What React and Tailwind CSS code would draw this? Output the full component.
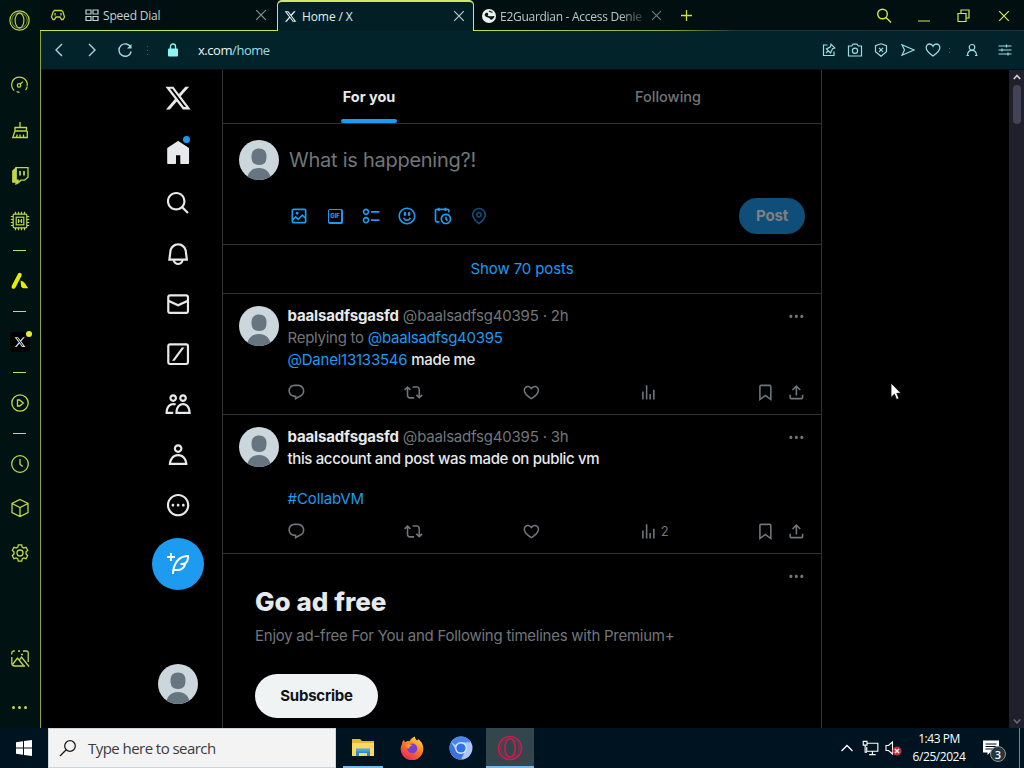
import React from "react";

const P = {
  x: "M18.244 2.25h3.308l-7.227 8.26 8.502 11.24H16.17l-5.214-6.817L4.99 21.75H1.68l7.73-8.835L1.254 2.25H8.08l4.713 6.231zm-1.161 17.52h1.833L7.084 4.126H5.117z",
  home: "M21.591 7.146L12.52 1.157c-.316-.21-.724-.21-1.04 0l-9.071 5.99c-.26.173-.409.456-.409.757v13.183c0 .502.418.913.929.913H9.14c.51 0 .929-.41.929-.913v-7.075h3.909v7.075c0 .502.417.913.928.913h6.165c.511 0 .929-.41.929-.913V7.904c0-.301-.158-.584-.408-.758z",
  search: "M10.25 3.75c-3.59 0-6.5 2.91-6.5 6.5s2.91 6.5 6.5 6.5c1.795 0 3.419-.726 4.596-1.904 1.178-1.177 1.904-2.801 1.904-4.596 0-3.59-2.91-6.5-6.5-6.5zm-8.5 6.5c0-4.694 3.806-8.5 8.5-8.5s8.5 3.806 8.5 8.5c0 1.986-.682 3.815-1.824 5.262l4.781 4.781-1.414 1.414-4.781-4.781c-1.447 1.142-3.276 1.824-5.262 1.824-4.694 0-8.5-3.806-8.5-8.5z",
  bell: "M19.993 9.042C19.48 5.017 16.054 2 11.996 2s-7.49 3.021-7.999 7.051L2.866 18H7.1c.463 2.282 2.481 4 4.9 4s4.437-1.718 4.9-4h4.236l-1.143-8.958zM12 20c-1.306 0-2.417-.835-2.829-2h5.658c-.412 1.165-1.523 2-2.829 2zm-6.866-4l.847-6.698C6.364 6.272 8.941 4 11.996 4s5.627 2.268 6.013 5.295L18.864 16H5.134z",
  mail: "M1.998 5.5c0-1.381 1.119-2.5 2.5-2.5h15c1.381 0 2.5 1.119 2.5 2.5v13c0 1.381-1.119 2.5-2.5 2.5h-15c-1.381 0-2.5-1.119-2.5-2.5v-13zm2.5-.5c-.276 0-.5.224-.5.5v2.764l8 3.638 8-3.636V5.5c0-.276-.224-.5-.5-.5h-15zm15.5 5.463l-8 3.636-8-3.638V18.5c0 .276.224.5.5.5h15c.276 0 .5-.224.5-.5v-8.037z",
  slash: "M4.5 2C3.12 2 2 3.12 2 4.5v15C2 20.88 3.12 22 4.5 22h15c1.38 0 2.5-1.12 2.5-2.5v-15C22 3.12 20.88 2 19.5 2h-15zM4 4.5c0-.28.22-.5.5-.5h15c.28 0 .5.22.5.5v15c0 .28-.22.5-.5.5h-15c-.28 0-.5-.22-.5-.5v-15zM15.3 6h2.4L8.8 18H6.4z",
  people: "M7.501 19.917L7.471 21H.472l.029-1.027c.184-6.618 3.736-8.977 7-8.977.963 0 1.95.212 2.87.672-.444.478-.851 1.03-1.212 1.656-.507-.204-1.054-.329-1.658-.329-2.767 0-4.57 2.223-4.938 6.004H7.56c-.023.302-.05.599-.059.918zm15.998.056L23.528 21H9.472l.029-1.027c.184-6.618 3.736-8.977 7-8.977s6.816 2.358 7 8.977zM21.437 19c-.367-3.781-2.17-6.004-4.938-6.004s-4.57 2.223-4.938 6.004h9.875zm-4.938-9c-.799 0-1.527-.279-2.116-.73-.836-.64-1.384-1.638-1.384-2.77 0-1.93 1.567-3.5 3.5-3.5s3.5 1.57 3.5 3.5c0 1.132-.548 2.13-1.384 2.77-.589.451-1.317.73-2.116.73zm-1.5-3.5c0 .827.673 1.5 1.5 1.5s1.5-.673 1.5-1.5-.673-1.5-1.5-1.5-1.5.673-1.5 1.5zM7.5 3C9.433 3 11 4.57 11 6.5S9.433 10 7.5 10 4 8.43 4 6.5 5.567 3 7.5 3zm0 2C6.673 5 6 5.673 6 6.5S6.673 8 7.5 8 9 7.327 9 6.5 8.327 5 7.5 5z",
  person: "M5.651 19h12.698c-.337-1.8-1.023-3.21-1.945-4.19C15.318 13.65 13.838 13 12 13s-3.317.65-4.404 1.81c-.922.98-1.608 2.39-1.945 4.19zm.486-5.56C7.627 11.85 9.648 11 12 11s4.373.85 5.863 2.44c1.477 1.58 2.366 3.8 2.632 6.46l.11 1.1H3.395l.11-1.1c.266-2.66 1.155-4.88 2.632-6.46zM12 4c-1.105 0-2 .9-2 2s.895 2 2 2 2-.9 2-2-.895-2-2-2zM8 6c0-2.21 1.791-4 4-4s4 1.79 4 4-1.791 4-4 4-4-1.79-4-4z",
  moreCircle: "M3.75 12c0-4.56 3.69-8.25 8.25-8.25s8.25 3.69 8.25 8.25-3.69 8.25-8.25 8.25S3.75 16.56 3.75 12zM12 1.75C6.34 1.75 1.75 6.34 1.75 12S6.34 22.25 12 22.25 22.25 17.66 22.25 12 17.66 1.75 12 1.75zm-4.75 11.5c.69 0 1.25-.56 1.25-1.25s-.56-1.25-1.25-1.25S6 11.31 6 12s.56 1.25 1.25 1.25zm9.5 0c.69 0 1.25-.56 1.25-1.25s-.56-1.25-1.25-1.25-1.25.56-1.25 1.25.56 1.25 1.25 1.25zM13.25 12c0 .69-.56 1.25-1.25 1.25s-1.25-.56-1.25-1.25.56-1.25 1.25-1.25 1.25.56 1.25 1.25z",
  compose: "M23 3c-6.62-.1-10.38 2.421-13.05 6.03C7.29 12.61 6 17.331 6 22h2c0-1.007.07-2.012.19-3H12c4.1 0 7.48-3.082 7.94-7.054C22.79 10.147 23.17 6.359 23 3zm-7 8h-1.5v2H16c.63-.016 1.2-.08 1.72-.188C16.95 15.24 14.68 17 12 17H8.55c.57-2.512 1.57-4.851 3-6.78 2.16-2.912 5.29-4.911 9.45-5.187C20.95 8.079 19.9 11 16 11zM4 9V6H1V4h3V1h2v3h3v2H6v3H4z",
  media: "M3 5.5C3 4.119 4.119 3 5.5 3h13C19.881 3 21 4.119 21 5.5v13c0 1.381-1.119 2.5-2.5 2.5h-13C4.119 21 3 19.881 3 18.5v-13zM5.5 5c-.276 0-.5.224-.5.5v9.086l3-3 3 3 5-5 3 3V5.5c0-.276-.224-.5-.5-.5h-13zM19 15.414l-3-3-5 5-3-3-3 3V18.5c0 .276.224.5.5.5h13c.276 0 .5-.224.5-.5v-3.086zM9.75 7C8.784 7 8 7.784 8 8.75s.784 1.75 1.75 1.75 1.75-.784 1.75-1.75S10.716 7 9.75 7z",
  poll: "M6 5c-1.1 0-2 .895-2 2s.9 2 2 2 2-.895 2-2-.9-2-2-2zM2 7c0-2.209 1.79-4 4-4s4 1.791 4 4-1.79 4-4 4-4-1.791-4-4zm20 1H12V6h10v2zM6 15c-1.1 0-2 .895-2 2s.9 2 2 2 2-.895 2-2-.9-2-2-2zm-4 2c0-2.209 1.79-4 4-4s4 1.791 4 4-1.79 4-4 4-4-1.791-4-4zm20 1H12v-2h10v2z",
  emoji: "M8 9.5C8 8.119 8.672 7 9.5 7S11 8.119 11 9.5 10.328 12 9.5 12 8 10.881 8 9.5zm6.5 2.5c.828 0 1.5-1.119 1.5-2.5S15.328 7 14.5 7 13 8.119 13 9.5s.672 2.5 1.5 2.5zM12 16c-2.224 0-3.021-2.227-3.051-2.316l-1.897.633c.05.15 1.271 3.684 4.949 3.684s4.898-3.533 4.949-3.684l-1.896-.638c-.033.095-.83 2.322-3.053 2.322zm10.25-4.001c0 5.652-4.598 10.25-10.25 10.25S1.75 17.652 1.75 12 6.348 1.75 12 1.75 22.25 6.348 22.25 12zm-2 0c0-4.549-3.701-8.25-8.25-8.25S3.75 7.451 3.75 12s3.701 8.25 8.25 8.25 8.25-3.701 8.25-8.25z",
  schedule: "M6 3V2h2v1h6V2h2v1h1.5C18.88 3 20 4.119 20 5.5v2h-2v-2c0-.276-.22-.5-.5-.5H16v1h-2V5H8v1H6V5H4.5c-.28 0-.5.224-.5.5v12c0 .276.22.5.5.5h3v2h-3C3.12 20 2 18.881 2 17.5v-12C2 4.119 3.12 3 4.5 3H6zm9.5 8c-2.49 0-4.5 2.015-4.5 4.5s2.01 4.5 4.5 4.5 4.5-2.015 4.5-4.5-2.01-4.5-4.5-4.5zM9 15.5C9 11.91 11.91 9 15.5 9s6.5 2.91 6.5 6.5-2.91 6.5-6.5 6.5S9 19.09 9 15.5zm5.5-2.5h2v2.086l1.71 1.707-1.42 1.414-2.29-2.293V13z",
  pin: "M12 7c-1.93 0-3.5 1.57-3.5 3.5S10.07 14 12 14s3.5-1.57 3.5-3.5S13.93 7 12 7zm0 5c-.827 0-1.5-.673-1.5-1.5S11.173 9 12 9s1.5.673 1.5 1.5S12.827 12 12 12zm0-10c-4.687 0-8.5 3.813-8.5 8.5 0 5.967 7.621 11.116 7.945 11.332l.555.37.555-.37c.324-.216 7.945-5.365 7.945-11.332C20.5 5.813 16.687 2 12 2zm0 17.77c-1.665-1.241-6.5-5.196-6.5-9.27C5.5 6.916 8.416 4 12 4s6.5 2.916 6.5 6.5c0 4.073-4.835 8.028-6.5 9.27z",
  reply: "M1.751 10c0-4.42 3.584-8 8.005-8h4.366c4.49 0 8.129 3.64 8.129 8.13 0 2.96-1.607 5.68-4.196 7.11l-8.054 4.46v-3.69h-.067c-4.49.1-8.183-3.51-8.183-8.01zm8.005-6c-3.317 0-6.005 2.69-6.005 6 0 3.37 2.77 6.08 6.138 6.01l.351-.01h1.761v2.3l5.087-2.81c1.951-1.08 3.163-3.13 3.163-5.36 0-3.39-2.744-6.13-6.129-6.13H9.756z",
  repost: "M4.5 3.88l4.432 4.14-1.364 1.46L5.5 7.55V16c0 1.1.896 2 2 2H13v2H7.5c-2.209 0-4-1.79-4-4V7.55L1.432 9.48.068 8.02 4.5 3.88zM16.5 6H11V4h5.5c2.209 0 4 1.79 4 4v8.45l2.068-1.93 1.364 1.46-4.432 4.14-4.432-4.14 1.364-1.46 2.068 1.93V8c0-1.1-.896-2-2-2z",
  like: "M16.697 5.5c-1.222-.06-2.679.51-3.89 2.16l-.805 1.09-.806-1.09C9.984 6.01 8.526 5.44 7.304 5.5c-1.243.07-2.349.78-2.91 1.91-.552 1.12-.633 2.78.479 4.82 1.074 1.97 3.257 4.27 7.129 6.61 3.87-2.34 6.052-4.64 7.126-6.61 1.111-2.04 1.03-3.7.477-4.82-.561-1.13-1.666-1.84-2.908-1.91zm4.187 7.69c-1.351 2.48-4.001 5.12-8.379 7.67l-.503.3-.504-.3c-4.379-2.55-7.029-5.19-8.382-7.67-1.36-2.5-1.41-4.86-.514-6.67.887-1.79 2.647-2.91 4.601-3.01 1.651-.09 3.368.56 4.798 2.01 1.429-1.45 3.146-2.1 4.796-2.01 1.954.1 3.714 1.22 4.601 3.01.896 1.81.846 4.17-.514 6.67z",
  views: "M8.75 21V3h2v18h-2zM18 21V8.5h2V21h-2zM4 21l.004-10h2L6 21H4zm9.248 0v-7h2v7h-2z",
  bookmark: "M4 4.5C4 3.12 5.119 2 6.5 2h11C18.881 2 20 3.12 20 4.5v18.44l-8-5.71-8 5.71V4.5zM6.5 4c-.276 0-.5.22-.5.5v14.56l6-4.29 6 4.29V4.5c0-.28-.224-.5-.5-.5h-11z",
  share: "M12 2.59l5.7 5.7-1.41 1.42L13 6.41V16h-2V6.41l-3.3 3.3-1.41-1.42L12 2.59zM21 15l-.02 3.51c0 1.38-1.12 2.49-2.5 2.49H5.5C4.11 21 3 19.88 3 18.5V15h2v3.5c0 .28.22.5.5.5h12.98c.28 0 .5-.22.5-.5L19 15h2z",
  dots: "M3 12c0-1.1.9-2 2-2s2 .9 2 2-.9 2-2 2-2-.9-2-2zm9 2c1.1 0 2-.9 2-2s-.9-2-2-2-2 .9-2 2 .9 2 2 2zm7 0c1.1 0 2-.9 2-2s-.9-2-2-2-2 .9-2 2 .9 2 2 2z",
};

function Glyph({ d, className }) {
  return (
    <svg viewBox="0 0 24 24" fill="currentColor" fillRule="evenodd" className={`block shrink-0 ${className}`}>
      <path d={d} />
    </svg>
  );
}

function Line({ className = "size-5", box = 20, width = 1.3, children }) {
  return (
    <svg
      viewBox={`0 0 ${box} ${box}`}
      fill="none"
      stroke="currentColor"
      strokeWidth={width}
      className={`block shrink-0 ${className}`}
    >
      {children}
    </svg>
  );
}

function OperaRing({ className }) {
  return (
    <Line className={className} width={1.1}>
      <circle cx="10" cy="10" r="9.2" />
      <circle cx="10" cy="10" r="7.4" strokeWidth="0.6" />
      <ellipse cx="10" cy="10" rx="4.2" ry="7" />
    </Line>
  );
}

function SideCell({ className = "h-[45px]", children }) {
  return <div className={`flex w-[39px] shrink-0 items-center justify-center ${className}`}>{children}</div>;
}

function Rule({ className = "h-[15px]" }) {
  return (
    <SideCell className={className}>
      <div className="h-px w-[13px] bg-[#c6e048]" />
    </SideCell>
  );
}

function OperaSidebar() {
  return (
    <aside className="flex w-10 shrink-0 flex-col bg-[#011212] text-[#c0d846]">
      <SideCell className="mb-[22px] h-10">
        <OperaRing className="size-[21px]" />
      </SideCell>
      <SideCell>
        <Line className="size-[19px]">
          <path d="M4.4 16.4A8.2 8.2 0 1 1 18 12M18 12.5a8 8 0 0 1-1.6 3.4M10 18.2l-3-.6" />
          <circle cx="9.5" cy="11" r="1.8" />
          <path d="M10.8 9.7 13.5 7" />
        </Line>
      </SideCell>
      <SideCell>
        <Line>
          <path d="M10 2v5M5 7.5h11.5V11H5zM5 11l-2.3 6.5h14.6V11M6.5 17.5l.7-3M10 17.5v-3M13.5 17.5v-3" />
        </Line>
      </SideCell>
      <SideCell>
        <Line>
          <path d="M6 2.7h12v9.5l-3.5 3H11L8 18v-2.8H6z" />
          <path d="M6 3 2.8 6v11H6v2l3-2.8-3-1z" fill="currentColor" />
          <path d="M10 6v4.5M14 6v4.5" strokeWidth="1.7" />
        </Line>
      </SideCell>
      <SideCell>
        <Line className="mt-0.5 size-5" width={1.2}>
          <rect x="3.2" y="3.2" width="13.6" height="13.6" rx="1" />
          <rect x="6.2" y="6.2" width="7.6" height="7.6" />
          <path d="M5.5.8v2.4M8.5.8v2.4M11.5.8v2.4M14.5.8v2.4M5.5 16.8v2.4M8.5 16.8v2.4M11.5 16.8v2.4M14.5 16.8v2.4M.8 5.5h2.4M.8 8.5h2.4M.8 11.5h2.4M.8 14.5h2.4M16.8 5.5h2.4M16.8 8.5h2.4M16.8 11.5h2.4M16.8 14.5h2.4" />
          <path d="M8.5 8v4M11.5 8v4M8.5 10h3" />
        </Line>
      </SideCell>
      <Rule className="h-[16px]" />
      <SideCell className="h-[46px]">
        <svg viewBox="0 0 20 20" className="block size-5" fill="#e4f000">
          <path d="M8.300 2.200q1.800-1 3 .3.9 1.200 0 2.700L5.500 16.500q-1 1.700-3.200 1Q.9 16.500 1.900 14.500z" />
          <path d="M10.500 9.500q2.500.5 4.500 3l3.200 4.700h-4.700q-1.500 0-2.300-1.800z" />
        </svg>
      </SideCell>
      <Rule />
      <SideCell className="h-[45px]">
        <div className="relative">
          <div className="flex size-5 items-center justify-center rounded-sm bg-black text-[#d8e4e2]">
            <Glyph d={P.x} className="size-3" />
          </div>
          <div className="absolute -right-[2px] -top-[1px] size-1.5 rounded-full bg-[#e6ee2e]" />
        </div>
      </SideCell>
      <Rule className="h-[16px]" />
      <SideCell>
        <Line>
          <circle cx="10" cy="10" r="8.2" />
          <path d="M7.5 7v6h2.2l3.6-3-3.6-3z" />
        </Line>
      </SideCell>
      <Rule className="h-[16px]" />
      <SideCell>
        <Line>
          <circle cx="10" cy="10" r="8.3" />
          <path d="M10 5v5.2l2.6 2.2" />
        </Line>
      </SideCell>
      <SideCell className="h-[45px] pb-px">
        <Line>
          <path d="M10 1.5l8 4v9l-8 4-8-4v-9zM2 5.5l8 4 8-4M10 9.5v9" />
        </Line>
      </SideCell>
      <SideCell className="h-[45px] pb-px">
        <Line>
          <circle cx="10" cy="10" r="3" />
          <path d="M8.3 1.8h3.4l.5 2.3 1.5.9 2.3-.7 1.7 3-1.7 1.7v2l1.7 1.7-1.7 3-2.3-.7-1.5.9-.5 2.3H8.3l-.5-2.3-1.5-.9-2.3.7-1.700-3L4 11V9L2.300 7.300l1.700-3 2.300.7 1.500-.9z" />
        </Line>
      </SideCell>
      <SideCell className="mt-auto h-[44px] pt-0.5">
        <Line>
          <path d="M1.8 5.5V4a2 2 0 0 1 2-2h1M8 2h2M13 2h3.2a2 2 0 0 1 2 2v9M1.8 8v6a3 3 0 0 0 3 3H15" />
          <path d="M2.5 15.5 7.5 9l6 7.500M9.500 11l2-3 7.500 9.500M11 5.500h2" />
        </Line>
      </SideCell>
      <SideCell className="mb-[-1px] h-[49px] pt-[11px]">
        <div className="mb-1.5 flex gap-[3px]">
          <i className="size-[3px] rounded-full bg-current" />
          <i className="size-[3px] rounded-full bg-current" />
          <i className="size-[3px] rounded-full bg-current" />
        </div>
      </SideCell>
    </aside>
  );
}

function Close({ className }) {
  return (
    <Line box={12} width={1.2} className={`size-3 ${className}`}>
      <path d="M1.2 1.2l9.6 9.6M10.8 1.2l-9.6 9.6" />
    </Line>
  );
}

function TabBar() {
  return (
    <div className="flex h-[31px] shrink-0 bg-[#010f10] font-['Open_Sans','Noto_Sans',sans-serif] text-[12px]">
      <div className="flex w-[237px] items-center border-b border-[#c6e24a] pl-[10px] text-[#c3d2d2]">
        <Line className="h-4 w-4 text-[#c0d440]" box={16}>
          <path d="M4.5 3.5h7L13 5l1.5 5-1.5 2.5h-1.5L10 10H6l-1.5 2.5H3L1.5 10 3 5zM5 6v2.5M11 6v2.5" />
        </Line>
        <Line className="ml-[19px] size-[14px]" box={14} width={1.2}>
          <path d="M1 2h5v4H1zM8 2h5v4H8zM1 8.5h5v4H1zM8 8.5h5v4H8z" />
        </Line>
        <span className="ml-[4px] pt-0.5 tracking-[-0.19px]">Speed Dial</span>
        <Close className="ml-auto mr-[10px] text-[#7e9494]" />
      </div>
      <div className="flex w-[197px] items-center rounded-t-[5px] border-x border-t-2 border-[#cfe868] bg-[#021f25] pb-px pl-[6px] text-[#e3f0f0]">
        <Glyph d={P.x} className="size-[13px]" />
        <span className="ml-[5px] pt-px tracking-[-0.1px]">Home / X</span>
        <Close className="ml-auto mr-[8px] text-[#b9cccc]" />
      </div>
      <div className="flex grow items-center bg-[image:linear-gradient(to_right,#c0dc48,#8fa83c_36%,#1b3438_48%)] bg-[length:100%_1px] bg-bottom bg-no-repeat">
        <div className="flex h-[31px] w-[234px] items-center pl-[8px] text-[#b9c8c8]">
          <svg viewBox="0 0 14 14" className="block size-[14px]">
            <circle cx="7" cy="7" r="7" fill="#eef1f1" />
            <path d="M2.500 6C3.500 3 6 3.500 6.200 5s-1.500 1 .5 2 3.800-.5 5.800 0c-1 4-4 4.200-4.500 3S6.800 8.800 5 8.200 3.500 7 2.500 6z" fill="#0a1618" />
            <path d="M7 2l3.500 1.500" stroke="#0a1618" strokeWidth="1.300" />
          </svg>
          <span className="ml-[4px] w-[142px] whitespace-nowrap pt-0.5 tracking-[-0.28px] [mask-image:linear-gradient(to_right,#000_84%,rgba(0,0,0,0.25))]">
            E2Guardian - Access Denie
          </span>
          <Close className="ml-[9px] size-[11px] text-[#6b8080]" />
          <Line className="ml-[18px] size-[13px] text-[#ccdf3c]" box={13}>
            <path d="M6.5 1v11M1 6.500h11" />
          </Line>
        </div>
        <div className="ml-auto flex items-center text-[#d2ea4c]">
          <Line className="size-4" box={16} width={1.4}>
            <circle cx="6.5" cy="6" r="4.8" />
            <path d="M10 9.500l5 5" />
          </Line>
          <Line className="ml-[26px] mt-[10px] h-1 w-3" box={12} width={3}>
            <path d="M-12 6h36" />
          </Line>
          <Line className="ml-[27px] size-[13px]" box={13} width={1.2}>
            <path d="M1 4.500h8v8H1zM4 4.500V1h8v8H9" />
          </Line>
          <Close className="ml-[28px] mr-[14px]" />
        </div>
      </div>
    </div>
  );
}

function AddressBar() {
  return (
    <div className="flex h-[39px] shrink-0 items-center border-b border-[#021014] bg-[#02232a] text-[#9fdbe0]">
      <Line className="ml-[11px] size-[14px]" box={14} width={1.4}>
        <path d="M10 1 4 7l6 6" />
      </Line>
      <Line className="ml-[19px] size-[14px]" box={14} width={1.4}>
        <path d="M4 1l6 6-6 6" />
      </Line>
      <Line className="ml-[18px] size-4" box={16} width={1.4}>
        <path d="M13.8 5.500A6.200 6.200 0 1 0 14.200 9.500" />
        <path d="M14.5 2v4.500H10z" fill="currentColor" stroke="none" />
      </Line>
      <div className="ml-[14px] flex flex-col gap-[3px]">
        <i className="size-px bg-[#2c6a70]" />
        <i className="size-px bg-[#2c6a70]" />
        <i className="size-px bg-[#2c6a70]" />
      </div>
      <svg viewBox="0 0 12 14" className="ml-[19px] block h-[14px] w-3 text-[#8ff3f3]">
        <rect x="1" y="5.500" width="10" height="8" rx="1" fill="currentColor" />
        <path d="M3.500 6V3.500a2.500 2.500 0 0 1 5 0V6" fill="none" stroke="currentColor" strokeWidth="1.400" />
      </svg>
      <span className="ml-[19px] pt-px font-['Open_Sans','Noto_Sans',sans-serif] text-[13px] tracking-[-0.45px] text-[#e4f6f6]">
        x.com<span className="text-[#a3dce2]">/home</span>
      </span>
      <div className="ml-auto mr-[12px] flex items-center">
        <Line className="size-[14px]" box={14} width={1.2}>
          <path d="M5.500 2H1.500v10.500H12V8.500M9 1.200l3.800 3.800-2.300.7-2 4.200-4-4 4-2zM6.500 7.500 4 10" />
        </Line>
        <Line className="ml-[11px] size-4" box={16} width={1.2}>
          <path d="M1.500 4h3.200L6 2.200h4L11.300 4h3.200v10h-13z" />
          <circle cx="8" cy="8.800" r="2.600" />
        </Line>
        <Line className="ml-[11px] size-[14px]" box={14} width={1.2}>
          <path d="M7 .8l5.500 1.800v6.200L7 13.300 1.500 8.800V2.600zM5 4.800l4 4M9 4.800l-4 4" />
        </Line>
        <Line className="ml-[13px] size-[14px]" box={14} width={1.2}>
          <path d="M1 1.800 13 7 1 12.200 3.500 7z" />
        </Line>
        <Line className="ml-[10px] size-4" box={16} width={1.3}>
          <path d="M8 14C4.500 11.500 1.200 9 1.200 5.700 1.200 3.500 2.800 2 4.700 2 6.200 2 7.400 2.900 8 4.200 8.600 2.900 9.800 2 11.300 2c1.900 0 3.500 1.500 3.500 3.700C14.800 9 11.500 11.500 8 14z" />
        </Line>
        <div className="ml-[8px] flex flex-col gap-[3px]">
          <i className="size-px bg-[#2c6a70]" />
          <i className="size-px bg-[#2c6a70]" />
        </div>
        <Line className="ml-[15px] size-[14px]" box={14} width={1.2}>
          <circle cx="7" cy="4.300" r="2.800" />
          <path d="M2.500 12.500c0-3.500 2-5.200 4.500-5.200s4.500 1.700 4.500 5.200M1.500 12.500H4M10 12.500h2.500" />
        </Line>
        <Line className="ml-[19px] size-[14px]" box={14} width={1.2}>
          <path d="M.5 3H13.500M.5 7H13.500M.5 11H13.500M8.500 1.500v3M4 5.500v3M10 9.500v3" />
        </Line>
      </div>
    </div>
  );
}

function Avatar() {
  return (
    <svg viewBox="0 0 40 40" className="block size-10 shrink-0 overflow-hidden rounded-full">
      <rect width="40" height="40" fill="#ccd6dd" />
      <path d="M20 8.500c5 0 7.500 3 7.500 7.500 0 4.500-.8 9-7.500 9s-7.500-4.500-7.500-9c0-4.500 2.500-7.500 7.500-7.500z" fill="#66757f" />
      <path d="M8 40c.5-8 5.500-12 12-12s11.500 4 12 12z" fill="#66757f" />
    </svg>
  );
}

const NAV = [
  { d: P.home, dot: true },
  { d: P.search },
  { d: P.bell },
  { d: P.mail },
  { d: P.slash },
  { d: P.people },
  { d: P.person },
  { d: P.moreCircle },
];

function XNav() {
  return (
    <nav className="ml-[111px] flex w-[52px] shrink-0 flex-col items-center text-[#e7e9ea]">
      <div className="flex h-[58px] items-center pb-[2px]">
        <Glyph d={P.x} className="size-[28px]" />
      </div>
      {NAV.map((n, i) => (
        <div key={i} className="relative flex h-[50.25px] items-center">
          <Glyph d={n.d} className="size-[26.25px]" />
          {n.dot && <span className="absolute right-[1px] top-[8px] size-[7px] rounded-full bg-[#1d9bf0]" />}
        </div>
      ))}
      <div className="mt-2 flex size-[52px] items-center justify-center rounded-full bg-[#1d9bf0] text-white">
        <Glyph d={P.compose} className="size-6" />
      </div>
      <div className="mb-6 mt-auto">
        <Avatar />
      </div>
    </nav>
  );
}

function Action({ d, children, className = "" }) {
  return (
    <div className={`flex items-center gap-[3px] ${className}`}>
      <Glyph d={d} className="size-[18.75px]" />
      {children}
    </div>
  );
}

function Post({ age, views, children, className }) {
  return (
    <article className={`flex border-b border-[#2f3336] pl-4 pt-3 text-[15px] ${className}`}>
      <Avatar />
      <div className="ml-2 flex w-[519px] flex-col">
        <div className="flex h-[20px] items-center pl-[0.5px]">
          <span className="font-bold tracking-[-0.15px] text-[#e7e9ea]">baalsadfsgasfd</span>
          <span className="ml-1 tracking-[-0.2px] text-[#71767b]">@baalsadfsg40395 · {age}</span>
          <Glyph d={P.dots} className="ml-auto size-[18.75px] text-[#71767b]" />
        </div>
        {children}
        <div className="mb-[12px] mt-auto flex h-5 items-center text-[#71767b]">
          <Action d={P.reply} className="w-[117px]" />
          <Action d={P.repost} className="w-[118px]" />
          <Action d={P.like} className="w-[117px]" />
          <Action d={P.views}>
            <span className="pt-0.5 text-[13px]">{views}</span>
          </Action>
          <Action d={P.bookmark} className="ml-auto" />
          <Action d={P.share} className="ml-[12.5px]" />
        </div>
      </div>
    </article>
  );
}

function Timeline() {
  return (
    <main className="ml-[18px] flex w-[600px] shrink-0 flex-col overflow-hidden border-x border-[#2f3336] font-['Inter','Roboto',sans-serif]">
      <div className="flex h-[54px] shrink-0 border-b border-[#2f3336] text-[14.5px]">
        <div className="flex w-[292px] justify-center">
          <div className="flex flex-col">
            <span className="flex h-[49px] items-center pt-[5px] font-bold tracking-[-0.02px] text-[#e7e9ea]">For you</span>
            <span className="-mx-[1.5px] h-1 rounded-full bg-[#1d9bf0]" />
          </div>
        </div>
        <div className="flex h-[50px] w-[306px] items-center justify-center pt-1 font-medium text-[#71767b]">Following</div>
      </div>

      <div className="flex h-[121px] shrink-0 border-b border-[#2f3336] pl-4 pt-4">
        <Avatar />
        <div className="flex w-[526px] flex-col pl-[10px]">
          <div className="flex h-10 items-center text-[20px] tracking-[-0.26px] text-[#71767b]">What is happening?!</div>
          <div className="mt-[18px] flex h-9 items-center gap-[16px] text-[#1d9bf0]">
            <Glyph d={P.media} className="size-5" />
            <div className="flex size-5 items-center justify-center">
              <div className="flex size-[15px] items-center justify-center rounded-[2px] bg-current p-[1.5px]">
                <span className="flex size-full items-center justify-center rounded-[1px] bg-black text-[6px] font-extrabold leading-[6px]">
                  <span className="text-[#1d9bf0]">GIF</span>
                </span>
              </div>
            </div>
            <Glyph d={P.poll} className="size-5" />
            <Glyph d={P.emoji} className="size-5" />
            <Glyph d={P.schedule} className="size-5" />
            <Glyph d={P.pin} className="size-5 opacity-50" />
            <button className="ml-auto h-9 w-[66px] rounded-full bg-[#0f4e78] text-[15px] font-bold tracking-[-0.15px] text-[#808080]">
              Post
            </button>
          </div>
        </div>
      </div>

      <div className="flex h-[49px] shrink-0 items-center justify-center border-b border-[#2f3336] text-[15px] tracking-[-0.12px] text-[#1d9bf0]">
        Show 70 posts
      </div>

      <Post age="2h" className="h-[121px] shrink-0">
        <div className="mt-[2px] pl-[0.5px] leading-[20px] tracking-[-0.26px] text-[#71767b]">
          Replying to <span className="text-[#1d9bf0]">@baalsadfsg40395</span>
        </div>
        <div className="mt-[2px] pl-[0.5px] leading-[20px] tracking-[-0.23px] text-[#1d9bf0]">
          @Danel13133546 <span className="font-medium tracking-[-0.36px] text-[#e7e9ea]">made me</span>
        </div>
      </Post>

      <Post age="3h" views="2" className="h-[139px] shrink-0">
        <div className="mt-[2px] pl-[0.5px] font-medium leading-[20px] tracking-[-0.36px] text-[#e7e9ea]">
          this account and post was made on public vm
        </div>
        <div className="mt-5 pl-[0.5px] leading-[20px] tracking-[-0.1px] text-[#1d9bf0]">#CollabVM</div>
      </Post>

      <section className="flex flex-col pl-8">
        <div className="mr-[15px] mt-3 flex h-5 items-center justify-end">
          <Glyph d={P.dots} className="size-[18.75px] text-[#71767b]" />
        </div>
        <h2 className="text-[26px] font-extrabold leading-[32px] tracking-[0.05px] text-[#e7e9ea]">Go ad free</h2>
        <p className="mt-[8px] text-[15px] leading-[20px] tracking-[-0.25px] text-[#71767b]">
          Enjoy ad-free For You and Following timelines with Premium+
        </p>
        <button className="mt-7 h-11 w-[123px] rounded-full bg-[#eff3f4] text-[15px] font-bold tracking-[-0.2px] text-[#0f1419]">
          Subscribe
        </button>
      </section>
    </main>
  );
}

function Scrollbar() {
  return (
    <div className="ml-auto flex w-[15px] flex-col items-center bg-[#20202c] text-[#c9c9d4]">
      <Line className="mt-[3px] size-2" box={8} width={1.8}>
        <path d="M.8 6 4 2.500 7.200 6" />
      </Line>
      <div className="mt-[4px] h-[39px] w-[8px] rounded-full bg-[#434358]" />
      <Line className="mb-[3px] mt-auto size-2 text-[#6d6d80]" box={8} width={1.5}>
        <path d="M.8 2.500 4 6l3.200-3.500" />
      </Line>
    </div>
  );
}

function Taskbar() {
  return (
    <footer className="flex h-10 shrink-0 bg-[#001320] font-['Open_Sans','Noto_Sans',sans-serif] text-white">
      <div className="flex w-12 items-center justify-center">
        <svg viewBox="0 0 16 16" className="block size-4" fill="#fff">
          <path d="M0 2.300 7 1.300v6.200H0zM8 1.100 16 0v7.500H8zM0 8.500h7v6.200l-7-1zM8 8.500h8V16l-8-1.100z" />
        </svg>
      </div>
      <div className="flex w-[288px] items-center border border-[#cfd4d8] bg-[#f3f3f3] text-[15px] tracking-[-0.55px] text-[#3b3b3b]">
        <Line className="ml-[10px] size-[18px] text-[#1c1c1c]" box={18} width={1.3}>
          <circle cx="11" cy="7" r="5.300" />
          <path d="M7.200 10.800 1 17" />
        </Line>
        <span className="ml-[11px]">Type here to search</span>
      </div>
      <div className="ml-[3px] flex w-12 flex-col items-center">
        <svg viewBox="0 0 22 20" className="mt-[10px] block h-5 w-[22px]">
          <path d="M0 1h8l2 2h12v15H0z" fill="#e8b431" />
          <path d="M0 5h22v13H0z" fill="#fbd860" />
          <path d="M4 18v-7h14v7h-3v-3H7v3z" fill="#2f86c8" />
          <path d="M4 10.500h14v3H4z" fill="#49a5dd" />
        </svg>
        <div className="mt-auto h-0.5 w-10 bg-[#76b9ed]" />
      </div>
      <div className="flex w-[49px] items-center justify-center">
        <svg viewBox="0 0 24 24" className="block size-6">
          <defs>
            <linearGradient id="fox" x1="0.8" y1="0" x2="0.2" y2="1">
              <stop offset="0" stopColor="#ffe04a" />
              <stop offset="0.45" stopColor="#ff7b22" />
              <stop offset="1" stopColor="#e8205c" />
            </linearGradient>
          </defs>
          <path d="M2 8c0-2 1-3.500 2-4 .2 1.200.8 1.800 1.500 2.200C7 5 8 5 9.500 5.200 11 3 12.500 1 15 .5c-.3 2 1 3 2 4C18 4 18 3.500 18 3c3 2 5.500 5.500 5.300 10A11.300 11.300 0 0 1 .7 13C.7 11 1.200 9.500 2 8z" fill="url(#fox)" />
          <circle cx="12.300" cy="12.500" r="5" fill="#7b3fd0" />
          <path d="M5 9c3-1.500 5-1 7.500.5-2.500.3-3.500 1.500-3 3-2-.2-4-1.500-4.500-3.500z" fill="#ff9a2e" />
        </svg>
      </div>
      <div className="flex w-[49px] items-center justify-center">
        <svg viewBox="0 0 24 24" className="block size-6">
          <circle cx="12" cy="12" r="11.500" fill="#a9c7fa" />
          <path d="M12 12 2 6.300A11.500 11.500 0 0 1 22 6.300l-10 .2z" fill="#4a86ea" />
          <path d="M2 6.300A11.500 11.500 0 0 0 12 23.500l4.500-9L7 14z" fill="#3a73dd" />
          <circle cx="12" cy="12" r="6" fill="#dbe8ff" />
          <circle cx="12" cy="12" r="4.600" fill="#2f72e8" />
        </svg>
      </div>
      <div className="ml-px flex w-12 flex-col items-center bg-[#33454d]">
        <svg viewBox="0 0 26 26" className="mt-[7px] block size-[26px]" fill="none" stroke="#c3204e" strokeWidth="1.600">
          <circle cx="13" cy="13" r="11.500" />
          <circle cx="13" cy="13" r="9.300" strokeWidth="0.800" />
          <ellipse cx="13" cy="13" rx="5.200" ry="9.200" />
        </svg>
        <div className="mt-auto h-0.5 w-12 bg-[#76b9ed]" />
      </div>
      <div className="ml-auto flex items-center">
        <Line className="size-3" box={12} width={1.3}>
          <path d="M.5 9 6 3.500 11.500 9" />
        </Line>
        <Line className="ml-[9px] h-4 w-[17px]" box={17} width={1.2}>
          <path d="M5 3.500h11.300v8.500H4.500V7.500M10.500 12v3M7 15.500h7M.8 1.500h4v4h-4zM2.800 5.500v7.500h2" />
        </Line>
        <svg viewBox="0 0 17 16" className="ml-[6px] block h-4 w-[17px]">
          <path d="M1 5.500h2.500L7.500 2v12L3.500 10.500H1z" fill="none" stroke="#fff" strokeWidth="1.100" />
          <circle cx="12" cy="11" r="4.500" fill="#c92b3c" />
          <path d="M10 9l4 4M14 9l-4 4" stroke="#fff" strokeWidth="1.400" />
        </svg>
        <div className="ml-[9px] flex w-[56px] flex-col items-center text-[12px] leading-[18px] tracking-[-0.45px]">
          <span>1:43 PM</span>
          <span>6/25/2024</span>
        </div>
        <div className="relative ml-[16px] mr-[20px]">
          <svg viewBox="0 0 16 16" className="block size-4">
            <path d="M0 .5h16v12H7L4.500 15v-2.500H0z" fill="#fff" />
            <path d="M2.500 4h11M2.500 6.500h11M2.500 9h11" stroke="#001320" strokeWidth="1" />
          </svg>
          <span className="absolute left-[7px] top-[6px] flex size-4 items-center justify-center rounded-full border border-[#8c959b] bg-[#25343e] text-[11px] font-semibold leading-none">
            3
          </span>
        </div>
      </div>
      <div className="mr-1 w-px bg-[#77838b]" />
    </footer>
  );
}

export default function App() {
  return (
    <div className="relative flex h-[768px] w-[1024px] flex-col overflow-hidden bg-black">
      <div className="flex h-[728px] shrink-0">
        <OperaSidebar />
        <div className="flex min-w-0 grow flex-col">
          <TabBar />
          <div className="flex min-h-0 grow flex-col border-l border-[#8fa636]">
            <AddressBar />
            <div className="flex min-h-0 grow bg-black">
              <XNav />
              <Timeline />
              <Scrollbar />
            </div>
          </div>
        </div>
      </div>
      <Taskbar />
      <svg viewBox="0 0 12 19" className="absolute left-[890px] top-[382px] block h-[19px] w-3">
        <path d="M1 1v14.500l3.400-3.300 2.200 5.300 2.400-1-2.200-5.200H11z" fill="#fff" stroke="#000" strokeWidth="0.800" />
      </svg>
    </div>
  );
}
